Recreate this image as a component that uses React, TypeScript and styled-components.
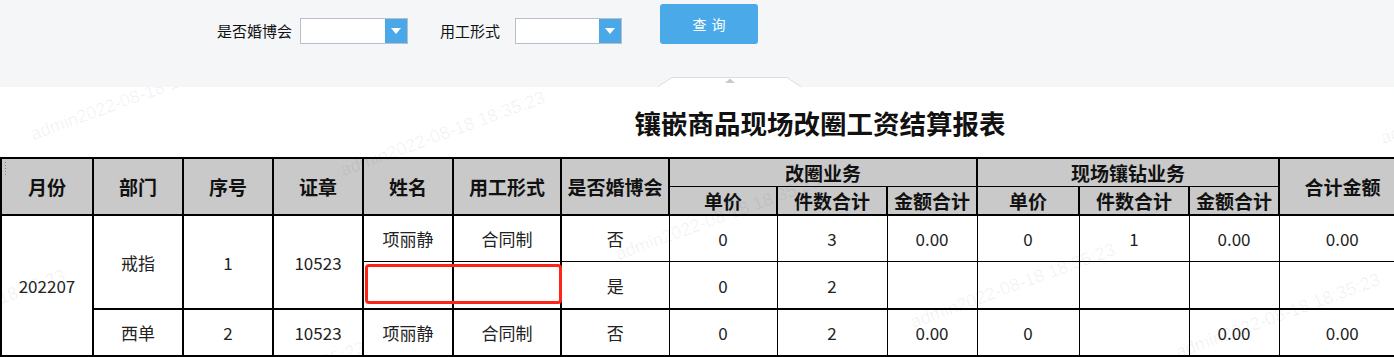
import { createGlobalStyle, styled } from "styled-components";

const GlobalStyle = createGlobalStyle`
  html, body {
    margin: 0;
    padding: 0;
    background: #ffffff;
    overflow: hidden;
  }
  body {
    font-family: "Noto Sans CJK SC", "Liberation Sans", sans-serif;
    color: #222;
  }
`;

const Page = styled.div`
  position: relative;
  width: 1394px;
  height: 357px;
  overflow: hidden;
`;

/* ---------- search bar ---------- */

const SearchBar = styled.div`
  position: relative;
  z-index: 10;
  height: 87px;
  background: #f5f6f8;
  display: flex;
  flex-direction: column;
  justify-content: space-between;
`;

const FilterRow = styled.div`
  display: flex;
  align-items: flex-end;
  padding: 4px 0 0 217px;
`;

const FilterLabel = styled.span<{ $gap: number }>`
  font-size: 15px;
  line-height: 26px;
  color: #111;
  margin-right: ${(p) => p.$gap}px;
`;

const Select = styled.div<{ $width: number; $gap: number }>`
  display: flex;
  width: ${(p) => p.$width}px;
  height: 26px;
  box-sizing: border-box;
  border: 1px solid #b9bfca;
  background: #fff;
  margin-right: ${(p) => p.$gap}px;
`;

const SelectValue = styled.div`
  flex: 1;
`;

const SelectArrow = styled.div`
  width: 22px;
  background: #4aa8e8;
  display: flex;
  align-items: center;
  justify-content: center;
`;

const QueryButton = styled.button`
  width: 98px;
  height: 40px;
  border: none;
  border-radius: 3px;
  background: #4aaae9;
  color: #fff;
  font-family: "Noto Sans CJK SC", sans-serif;
  font-size: 14px;
  letter-spacing: 5px;
  padding: 0 0 0 5px;
  cursor: pointer;
`;

const CollapseTab = styled.svg`
  display: block;
  margin-left: 657px;
`;

/* ---------- report ---------- */

const Report = styled.div`
  width: 1640px;
`;

const ReportTitle = styled.h1`
  margin: 0;
  height: 70px;
  line-height: 72px;
  text-align: center;
  font-size: 26.5px;
  font-weight: 700;
  color: #111;
`;

const Table = styled.table`
  border-collapse: collapse;
  table-layout: fixed;
  width: 1405px;
  border: 2px solid #000;
`;

const Th = styled.th<{ $thinBottom?: boolean; $thinTop?: boolean }>`
  position: relative;
  background: #c9c9c9;
  height: 27px;
  padding: 0;
  border: 2px solid #000;
  ${(p) => (p.$thinBottom ? "border-bottom-width: 1px;" : "")}
  ${(p) => (p.$thinTop ? "border-top-width: 1px;" : "")}
  font-size: 19px;
  font-weight: 700;
  color: #111;
  white-space: nowrap;
  text-align: center;
  vertical-align: middle;
`;

const Td = styled.td<{ $h?: number; $thick?: boolean; $groupTop?: boolean }>`
  position: relative;
  height: ${(p) => p.$h ?? 45}px;
  padding: 0;
  border: 1px solid #000;
  ${(p) => (p.$thick ? "border-left-width: 2px; border-right-width: 2px;" : "")}
  ${(p) => (p.$groupTop ? "border-top-width: 2px;" : "")}
  font-size: 17px;
  color: #222;
  text-align: center;
  vertical-align: middle;
`;

const Grip = styled.span`
  position: absolute;
  left: 2px;
  top: 2px;
  width: 3px;
  height: 15px;
  background-image: radial-gradient(#7d8794 0.8px, transparent 0.9px);
  background-size: 3px 3px;
`;

const Highlight = styled.span`
  position: absolute;
  left: 1px;
  top: 2px;
  width: 197px;
  height: 40px;
  box-sizing: border-box;
  border: 3px solid #ff2418;
  border-radius: 4px;
  z-index: 2;
`;

/* ---------- watermark ---------- */

const Watermarks = styled.div`
  position: absolute;
  inset: 0;
  pointer-events: none;
  z-index: 5;
`;

const Mark = styled.span<{ $x: number; $y: number }>`
  position: absolute;
  left: ${(p) => p.$x}px;
  top: ${(p) => p.$y}px;
  font-family: "Liberation Sans", sans-serif;
  font-size: 18px;
  color: rgba(0, 0, 0, 0.06);
  white-space: nowrap;
  transform: rotate(-20deg);
  transform-origin: 0 100%;
`;

const markSpots = [
  { x: 35, y: 124 },
  { x: 345, y: 160 },
  { x: -135, y: 338 },
  { x: 620, y: 244 },
  { x: 915, y: 312 },
  { x: 1180, y: 342 },
  { x: 1385, y: 128 },
  { x: 165, y: 410 },
];

const widths = [92, 90, 90, 90, 90, 108, 108, 108, 110, 90, 102, 110, 90, 127];

const ArrowDown = () => (
  <svg width="10" height="6" viewBox="0 0 10 6">
    <path d="M0 0 L10 0 L5 6 Z" fill="#fff" />
  </svg>
);

const App = () => {
  return (
    <Page>
      <GlobalStyle />
      <SearchBar>
        <FilterRow>
          <FilterLabel $gap={8}>是否婚博会</FilterLabel>
          <Select $width={108} $gap={32}>
            <SelectValue />
            <SelectArrow>
              <ArrowDown />
            </SelectArrow>
          </Select>
          <FilterLabel $gap={15}>用工形式</FilterLabel>
          <Select $width={107} $gap={38}>
            <SelectValue />
            <SelectArrow>
              <ArrowDown />
            </SelectArrow>
          </Select>
          <QueryButton>查询</QueryButton>
        </FilterRow>
        <CollapseTab width="145" height="11" viewBox="0 0 145 11">
          <path d="M0.5 11 L15 1.5 L130 1.5 L144.5 11" fill="#fff" stroke="#d9dde3" />
          <path d="M68 7 L73 2.5 L78 7 Z" fill="#c7c9cc" />
        </CollapseTab>
      </SearchBar>

      <Report>
        <ReportTitle>镶嵌商品现场改圈工资结算报表</ReportTitle>
        <Table>
          <colgroup>
            {widths.map((w, i) => (
              <col key={i} style={{ width: w }} />
            ))}
          </colgroup>
          <thead>
            <tr>
              <Th rowSpan={2}>
                <Grip />
                月份
              </Th>
              <Th rowSpan={2}>部门</Th>
              <Th rowSpan={2}>序号</Th>
              <Th rowSpan={2}>证章</Th>
              <Th rowSpan={2}>姓名</Th>
              <Th rowSpan={2}>用工形式</Th>
              <Th rowSpan={2}>是否婚博会</Th>
              <Th colSpan={3} $thinBottom>
                改圈业务
              </Th>
              <Th colSpan={3} $thinBottom>
                现场镶钻业务
              </Th>
              <Th rowSpan={2}>合计金额</Th>
            </tr>
            <tr>
              <Th $thinTop>单价</Th>
              <Th $thinTop>件数合计</Th>
              <Th $thinTop>金额合计</Th>
              <Th $thinTop>单价</Th>
              <Th $thinTop>件数合计</Th>
              <Th $thinTop>金额合计</Th>
            </tr>
          </thead>
          <tbody>
            <tr>
              <Td rowSpan={3} $thick>
                202207
              </Td>
              <Td rowSpan={2} $thick>
                戒指
              </Td>
              <Td rowSpan={2} $thick>
                1
              </Td>
              <Td rowSpan={2} $thick>
                10523
              </Td>
              <Td $thick>项丽静</Td>
              <Td $thick>合同制</Td>
              <Td>否</Td>
              <Td>0</Td>
              <Td>3</Td>
              <Td>0.00</Td>
              <Td>0</Td>
              <Td>1</Td>
              <Td>0.00</Td>
              <Td>0.00</Td>
            </tr>
            <tr>
              <Td $h={46} $thick>
                <Highlight />
              </Td>
              <Td $h={46} $thick />
              <Td $h={46}>是</Td>
              <Td $h={46}>0</Td>
              <Td $h={46}>2</Td>
              <Td $h={46} />
              <Td $h={46} />
              <Td $h={46} />
              <Td $h={46} />
              <Td $h={46} />
            </tr>
            <tr>
              <Td $h={45} $thick $groupTop>
                西单
              </Td>
              <Td $h={45} $thick $groupTop>
                2
              </Td>
              <Td $h={45} $thick $groupTop>
                10523
              </Td>
              <Td $h={45} $thick $groupTop>
                项丽静
              </Td>
              <Td $h={45} $thick $groupTop>
                合同制
              </Td>
              <Td $h={45} $groupTop>
                否
              </Td>
              <Td $h={45} $groupTop>
                0
              </Td>
              <Td $h={45} $groupTop>
                2
              </Td>
              <Td $h={45} $groupTop>
                0.00
              </Td>
              <Td $h={45} $groupTop>
                0
              </Td>
              <Td $h={45} $groupTop />
              <Td $h={45} $groupTop>
                0.00
              </Td>
              <Td $h={45} $groupTop>
                0.00
              </Td>
            </tr>
          </tbody>
        </Table>
      </Report>

      <Watermarks>
        {markSpots.map((m, i) => (
          <Mark key={i} $x={m.x} $y={m.y}>
            admin2022-08-18 18:35:23
          </Mark>
        ))}
      </Watermarks>
    </Page>
  );
};

export default App;
